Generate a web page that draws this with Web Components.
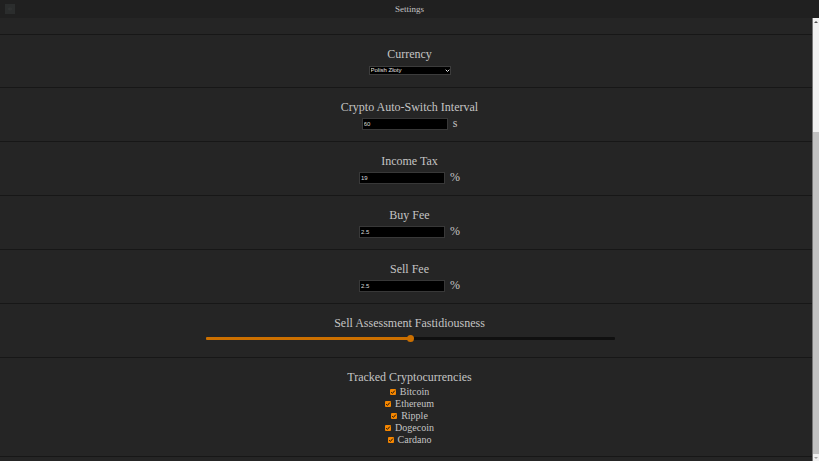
<!DOCTYPE html>
<html lang="en">
<head>
<meta charset="utf-8">
<title>Settings</title>
<style>
html, body { margin: 0; height: 100%; background: #252525; }
body { font-family: "Liberation Serif", serif; color: #c4c4c4; overflow: hidden; }
</style>
</head>
<body>
<settings-app></settings-app>
<script>
const define = (name, html, setup) => customElements.define(name, class extends HTMLElement {
  connectedCallback() {
    if (this.shadowRoot) return;
    const t = document.createElement('template');
    t.innerHTML = html;
    this.attachShadow({ mode: 'open' }).append(t.content.cloneNode(true));
    if (setup) setup(this, this.shadowRoot);
  }
});

define('app-header', `
<style>
:host { display: grid; grid-template-columns: 20px 1fr 20px; align-items: center; height: 18px; background: #202020; }
button { width: 10px; height: 10px; margin: 0 0 0 5px; padding: 0; border: 0; background: #2b2d2d; display: grid; place-items: center; }
svg { width: 6px; height: 6px; display: block; }
h1 { margin: 0; font: inherit; font-size: 9px; line-height: 18px; text-align: center; }
</style>
<button aria-label="Back"><svg viewBox="0 0 6 6"><path d="M3 1.5 1.5 3 3 4.5M1.5 3H5" fill="none" stroke="#363a3a" stroke-width=".7"/></svg></button>
<h1><slot></slot></h1>`);

define('setting-section', `
<style>
:host { display: flex; flex-direction: column; align-items: center; padding: 12px 0; border-bottom: 1px solid #171717; }
h2 { margin: 0; font: inherit; font-size: 12px; line-height: 14px; }
</style>
<h2><slot name="title"></slot></h2><slot></slot>`);

define('select-field', `
<style>
:host { display: flex; margin-top: 5px; }
.box { display: grid; width: 82px; }
select { grid-area: 1/1; appearance: none; box-sizing: border-box; width: 100%; height: 9px; margin: 0; padding: 0 1px; border: 1px solid #3c3c3c; border-radius: 0; background: #000; color: #e0e0e0; font: 6px/7px "Liberation Sans", sans-serif; }
svg { grid-area: 1/1; justify-self: end; align-self: center; width: 5px; height: 5px; margin-right: 1px; pointer-events: none; z-index: 1; }
</style>
<div class="box"><select aria-label="Currency"><option></option></select>
<svg viewBox="0 0 5 5"><path d="M.7 1.7 2.5 3.5 4.3 1.7" fill="none" stroke="#eee" stroke-width="1"/></svg></div>`,
(h, r) => { r.querySelector('option').textContent = h.getAttribute('value'); });

define('number-field', `
<style>
:host { display: flex; align-items: flex-start; gap: 5px; margin: 4px 0 -1px; }
input { box-sizing: border-box; width: 86px; height: 12px; margin: 0; padding: 0 1px; border: 1px solid #383838; border-radius: 0; background: #000; color: #d8d8d8; font: 6px/10px "Liberation Sans", sans-serif; }
label { font-size: 12px; line-height: 10px; }
</style>
<input id="v" type="text" inputmode="decimal"><label for="v"></label>`,
(h, r) => {
  const i = r.querySelector('input');
  i.value = h.getAttribute('value');
  i.setAttribute('aria-label', h.getAttribute('label'));
  r.querySelector('label').textContent = h.getAttribute('unit');
});

define('range-field', `
<style>
:host { display: flex; justify-content: center; width: 100%; margin: 5px 0 3px; }
input { appearance: none; width: 50%; height: 7px; margin: 0 0 0 2px; background: transparent; }
input::-webkit-slider-runnable-track { height: 3px; background: linear-gradient(90deg, #cc7000 50%, #101010 50%); border-radius: 1px; }
input::-webkit-slider-thumb { appearance: none; width: 7px; height: 7px; margin-top: -2px; border-radius: 50%; background: #cc7000; }
</style>
<input type="range" min="0" max="100" value="50" aria-label="Sell Assessment Fastidiousness">`);

define('check-field', `
<style>
:host { display: block; }
label { display: flex; align-items: center; gap: 4px; font-size: 10px; line-height: 12px; }
.box { display: grid; place-items: center; }
input { grid-area: 1/1; appearance: none; width: 6px; height: 6px; margin: 0; border-radius: 1px; background: #f58600; }
svg { grid-area: 1/1; width: 6px; height: 6px; pointer-events: none; z-index: 1; }
</style>
<label><span class="box"><input type="checkbox" checked><svg viewBox="0 0 6 6"><path d="M1.2 3.2 2.4 4.4 4.8 1.6" fill="none" stroke="#1c1208" stroke-width="1"/></svg></span><slot></slot></label>`);

define('check-list', `
<style>:host { display: flex; flex-direction: column; align-items: center; margin: 2px 0 -2px; }</style><slot></slot>`);

define('scroll-bar', `
<style>
:host { display: grid; grid-template-rows: 7px 107fr 322fr 7px; background: #f1f1f1; border-left: 1px solid #777; }
.thumb { grid-row: 3; background: #c1c1c1; }
svg { width: 6px; height: 7px; display: block; }
.down { grid-row: 4; }
</style>
<svg viewBox="0 0 6 7"><path d="M1 5 3 3 5 5Z" fill="#505050"/></svg><div class="thumb"></div>
<svg class="down" viewBox="0 0 6 7"><path d="M1 3h4L3 5Z" fill="#a3a3a3"/></svg>`);

define('settings-app', `
<style>
:host { display: grid; grid-template: auto 1fr / 1fr 7px; height: 100vh; overflow: hidden; }
app-header { grid-area: 1 / 1 / 2 / 3; }
main { grid-area: 2 / 1 / 3 / 3; min-height: 0; overflow: hidden; }
scroll-bar { grid-area: 2 / 2; z-index: 1; }
.previous { height: 16px; border-bottom: 1px solid #171717; }
</style>
<app-header>Settings</app-header>
<main>
<div class="previous"></div>
<setting-section><span slot="title">Currency</span><select-field value="Polish Złoty"></select-field></setting-section>
<setting-section><span slot="title">Crypto Auto-Switch Interval</span><number-field label="Crypto Auto-Switch Interval" value="60" unit="s"></number-field></setting-section>
<setting-section><span slot="title">Income Tax</span><number-field label="Income Tax" value="19" unit="%"></number-field></setting-section>
<setting-section><span slot="title">Buy Fee</span><number-field label="Buy Fee" value="2.5" unit="%"></number-field></setting-section>
<setting-section><span slot="title">Sell Fee</span><number-field label="Sell Fee" value="2.5" unit="%"></number-field></setting-section>
<setting-section><span slot="title">Sell Assessment Fastidiousness</span><range-field></range-field></setting-section>
<setting-section><span slot="title">Tracked Cryptocurrencies</span><check-list>
<check-field>Bitcoin</check-field><check-field>Ethereum</check-field><check-field>Ripple</check-field><check-field>Dogecoin</check-field><check-field>Cardano</check-field></check-list></setting-section>
</main>
<scroll-bar></scroll-bar>`);
</script>
</body>
</html>
